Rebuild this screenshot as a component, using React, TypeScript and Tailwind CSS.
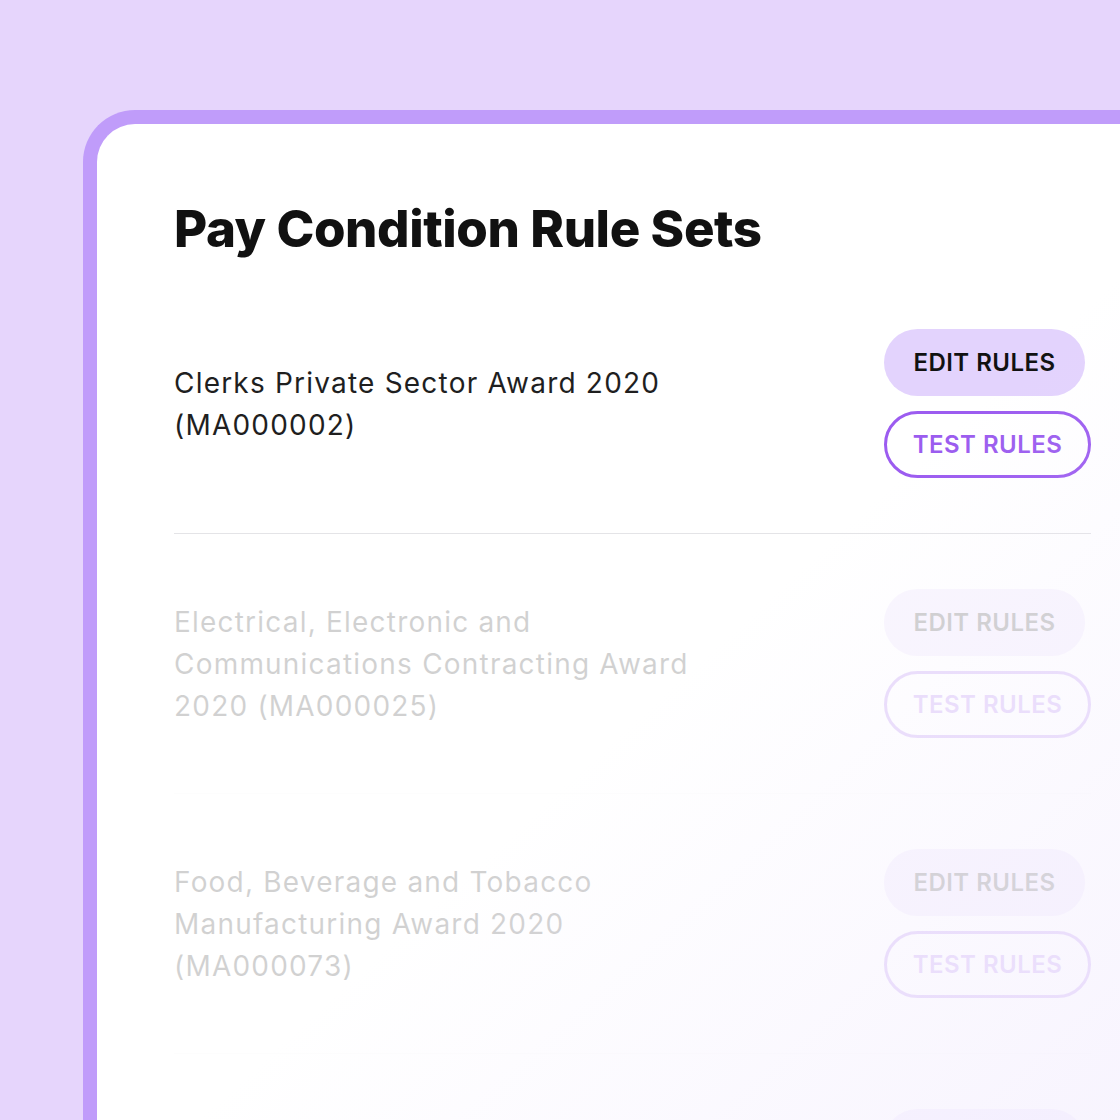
import React from "react";

const rows = [
  { name: ["Clerks Private Sector Award 2020", "(MA000002)"], faded: false },
  { name: ["Electrical, Electronic and", "Communications Contracting Award", "2020 (MA000025)"], faded: true },
  { name: ["Food, Beverage and Tobacco", "Manufacturing Award 2020", "(MA000073)"], faded: true },
  { name: ["General Retail Industry Award", "2020 (MA000004)"], faded: true },
];

function Row({ name, faded }: { name: string[]; faded: boolean }) {
  return (
    <div className={`flex items-center justify-between py-[55px] border-b ${faded ? "opacity-[0.2] border-[#f4f4f5]" : "border-[#e4e4e7]"}`}>
      <div className="text-[28px] leading-[42px] text-[#1f1f1f] tracking-[0.043em]">
        {name.map((l) => (
          <div key={l}>{l}</div>
        ))}
      </div>
      <div className="flex flex-col items-start gap-[15px] w-[207px]">
        <button className="h-[67px] w-[201px] rounded-full bg-[#e3d3fd] text-[#111111] text-[24px] font-semibold tracking-[0.02em]">
          EDIT RULES
        </button>
        <button className="h-[67px] w-[207px] rounded-full border-[3px] border-[#9c5cf0] text-[#9b5cef] text-[24px] font-semibold tracking-[0.02em]">
          TEST RULES
        </button>
      </div>
    </div>
  );
}

export default function App() {
  return (
    <div className="w-[1120px] h-[1120px] overflow-hidden bg-[#e6d5fc] pt-[110px] pl-[83px]" style={{ fontFamily: "Inter, 'Noto Sans', sans-serif" }}>
      <div className="relative w-[1200px] h-[1100px] rounded-tl-[52px] border-l-[14px] border-t-[14px] border-[#c09cfa] bg-white pl-[77px] pr-[109px] pt-[75px]">
        <h1 className="text-[51px] leading-[60px] font-extrabold text-[#111111] tracking-[-0.008em]">
          Pay Condition Rule Sets
        </h1>
        <div className="mt-[15px] w-[917px]">
          {rows.map((r, i) => (
            <Row key={i} name={r.name} faded={r.faded} />
          ))}
        </div>
        <div className="pointer-events-none absolute inset-0 bg-gradient-to-br from-white/0 via-white/0 to-[#ece3fd]/50" />
      </div>
    </div>
  );
}
